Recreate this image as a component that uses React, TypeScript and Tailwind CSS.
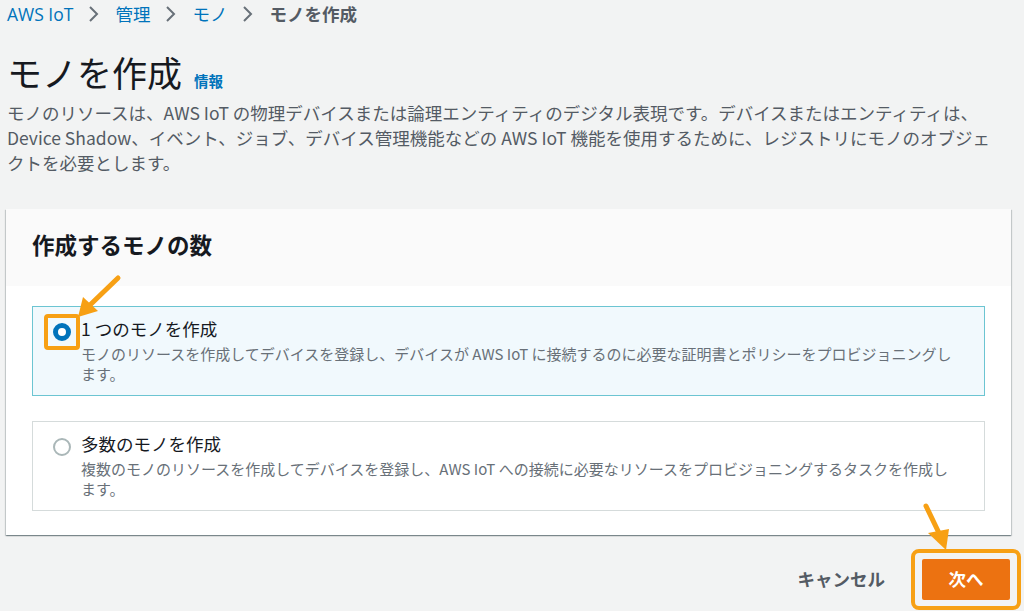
import React from "react";

const JP = "font-['Noto_Sans_CJK_JP',sans-serif]";
const MIX = "font-['Open_Sans','Noto_Sans_CJK_JP',sans-serif]";

function Chevron() {
  return (
    <svg width="12" height="18" viewBox="0 0 12 18" className="mx-[15px]">
      <path d="M2 2 L9 9 L2 16" fill="none" stroke="#687078" strokeWidth="2" />
    </svg>
  );
}

function Radio({ checked }: { checked: boolean }) {
  return checked ? (
    <span className="block w-[18px] h-[18px] rounded-full border-[5px] border-[#0073bb] bg-white" />
  ) : (
    <span className="block w-[18px] h-[18px] rounded-full border-2 border-[#aab7b8] bg-white" />
  );
}

const OPTIONS = [
  {
    label: "1 つのモノを作成",
    lines: [
      "モノのリソースを作成してデバイスを登録し、デバイスが AWS IoT に接続するのに必要な証明書とポリシーをプロビジョニングし",
      "ます。",
    ],
    checked: true,
  },
  {
    label: "多数のモノを作成",
    lines: [
      "複数のモノのリソースを作成してデバイスを登録し、AWS IoT への接続に必要なリソースをプロビジョニングするタスクを作成し",
      "ます。",
    ],
    checked: false,
  },
];

export default function App() {
  return (
    <div className={`relative w-[1024px] h-[611px] overflow-hidden bg-[#f2f3f3] px-[6px] text-[#16191f] ${JP}`}>
      {/* Breadcrumb */}
      <div className={`flex items-center pl-px h-[28px] text-[17.5px] leading-[28px] ${MIX}`}>
        <span className="text-[#0073bb]">AWS IoT</span>
        <Chevron />
        <span className="text-[#0073bb]">管理</span>
        <Chevron />
        <span className="text-[#0073bb]">モノ</span>
        <Chevron />
        <span className="text-[#545b64] font-semibold">モノを作成</span>
      </div>

      {/* Title */}
      <div className="mt-[22px] pl-px flex items-baseline gap-[12px]">
        <h1 className="text-[35px] leading-[44px] font-normal">モノを作成</h1>
        <span className="text-[14.5px] font-bold text-[#0073bb]">情報</span>
      </div>

      <p className="mt-[6px] pl-px text-[17.5px] leading-[25px] text-[#545b64] whitespace-nowrap">
        モノのリソースは、AWS IoT の物理デバイスまたは論理エンティティのデジタル表現です。デバイスまたはエンティティは、
        <br />
        Device Shadow、イベント、ジョブ、デバイス管理機能などの AWS IoT 機能を使用するために、レジストリにモノのオブジェ
        <br />
        クトを必要とします。
      </p>

      {/* Card */}
      <div className="mt-[34px] w-[1005px] bg-white shadow-[0_1px_1px_0_rgba(0,28,36,0.3),1px_1px_1px_0_rgba(0,28,36,0.15),-1px_1px_1px_0_rgba(0,28,36,0.15)]">
        <div className="h-[77px] bg-[#fafafa] px-[26px] pt-[21px]">
          <h2 className="text-[22.5px] leading-[28px] font-bold">作成するモノの数</h2>
        </div>
        <div className="px-[26px] pt-[20px] pb-[24px] flex flex-col gap-[25px]">
          {OPTIONS.map((o) => (
            <div
              key={o.label}
              className={`h-[90px] flex gap-[10px] pl-[20px] pt-[11px] border ${
                o.checked ? "border-[#6cc5d2] bg-[#f1f9fd]" : "border-[#d5dbdb] bg-white"
              }`}
            >
              <div className="relative mt-[5px] w-[18px] h-[18px] shrink-0">
                <Radio checked={o.checked} />
                {o.checked && (
                  <span className="absolute -inset-[9px] rounded-[4px] border-[4px] border-[#f7a014]" />
                )}
              </div>
              <div className="whitespace-nowrap">
                <div className="mb-[4px] text-[17.5px] leading-[22px] text-[#16191f]">{o.label}</div>
                <div className="text-[15px] leading-[20px] text-[#687078]">
                  {o.lines[0]}
                  <br />
                  {o.lines[1]}
                </div>
              </div>
            </div>
          ))}
        </div>
      </div>

      {/* Footer */}
      <div className="mt-[24px] w-[1004px] flex items-center justify-end gap-[37px]">
        <span className="text-[17.5px] font-bold text-[#545b64]">キャンセル</span>
        <div className="relative">
          <button className="w-[88px] h-[41px] rounded-[2px] bg-[#ec7211] text-white text-[17.5px] font-bold">
            次へ
          </button>
          <span className="absolute -inset-x-[11px] -inset-y-[10px] rounded-[8px] border-[4px] border-[#f7a014]" />
        </div>
      </div>

      {/* Annotation arrows */}
      <svg className="absolute left-0 top-0 pointer-events-none" width="1024" height="611">
        <line x1="118" y1="278" x2="90" y2="305" stroke="#f7a014" strokeWidth="5" strokeLinecap="round" />
        <polygon points="78,317 83,297 98,311" fill="#f7a014" />
        <line x1="926" y1="506" x2="939" y2="533" stroke="#f7a014" strokeWidth="5" strokeLinecap="round" />
        <polygon points="946,550 928,533 949,529" fill="#f7a014" />
      </svg>
    </div>
  );
}
